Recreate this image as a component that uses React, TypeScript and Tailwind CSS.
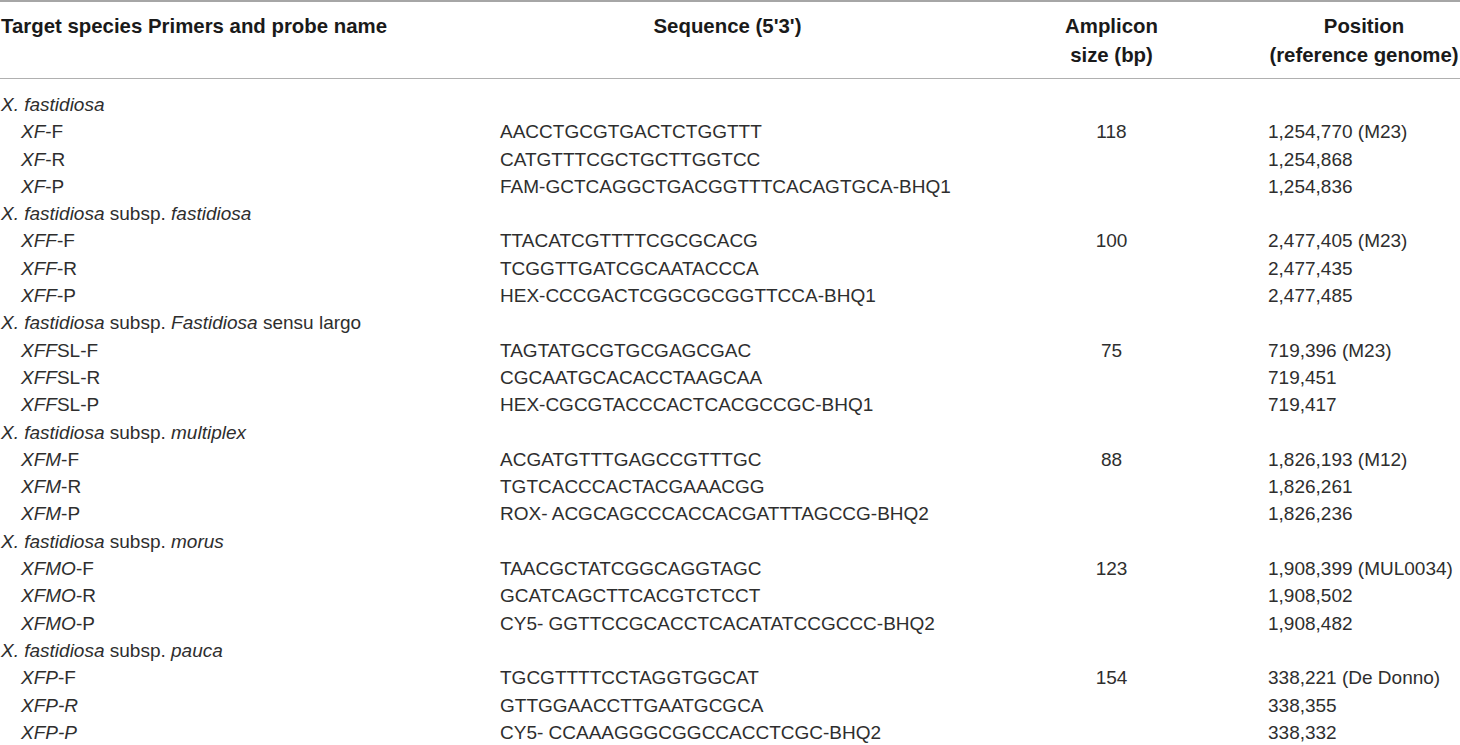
import { ReactNode } from "react";

type Primer = {
  name: ReactNode;
  seq: string;
  size?: string;
  pos: string;
};

type Group = {
  label: ReactNode;
  primers: Primer[];
};

const groups: Group[] = [
  {
    label: <i>X. fastidiosa</i>,
    primers: [
      { name: <><i>XF</i>-F</>, seq: "AACCTGCGTGACTCTGGTTT", size: "118", pos: "1,254,770 (M23)" },
      { name: <><i>XF</i>-R</>, seq: "CATGTTTCGCTGCTTGGTCC", pos: "1,254,868" },
      { name: <><i>XF</i>-P</>, seq: "FAM-GCTCAGGCTGACGGTTTCACAGTGCA-BHQ1", pos: "1,254,836" },
    ],
  },
  {
    label: <><i>X. fastidiosa</i> subsp. <i>fastidiosa</i></>,
    primers: [
      { name: <><i>XFF</i>-F</>, seq: "TTACATCGTTTTCGCGCACG", size: "100", pos: "2,477,405 (M23)" },
      { name: <><i>XFF</i>-R</>, seq: "TCGGTTGATCGCAATACCCA", pos: "2,477,435" },
      { name: <><i>XFF</i>-P</>, seq: "HEX-CCCGACTCGGCGCGGTTCCA-BHQ1", pos: "2,477,485" },
    ],
  },
  {
    label: <><i>X. fastidiosa</i> subsp. <i>Fastidiosa</i> sensu largo</>,
    primers: [
      { name: <><i>XFF</i>SL-F</>, seq: "TAGTATGCGTGCGAGCGAC", size: "75", pos: "719,396 (M23)" },
      { name: <><i>XFF</i>SL-R</>, seq: "CGCAATGCACACCTAAGCAA", pos: "719,451" },
      { name: <><i>XFF</i>SL-P</>, seq: "HEX-CGCGTACCCACTCACGCCGC-BHQ1", pos: "719,417" },
    ],
  },
  {
    label: <><i>X. fastidiosa</i> subsp. <i>multiplex</i></>,
    primers: [
      { name: <><i>XFM</i>-F</>, seq: "ACGATGTTTGAGCCGTTTGC", size: "88", pos: "1,826,193 (M12)" },
      { name: <><i>XFM</i>-R</>, seq: "TGTCACCCACTACGAAACGG", pos: "1,826,261" },
      { name: <><i>XFM</i>-P</>, seq: "ROX- ACGCAGCCCACCACGATTTAGCCG-BHQ2", pos: "1,826,236" },
    ],
  },
  {
    label: <><i>X. fastidiosa</i> subsp. <i>morus</i></>,
    primers: [
      { name: <><i>XFMO</i>-F</>, seq: "TAACGCTATCGGCAGGTAGC", size: "123", pos: "1,908,399 (MUL0034)" },
      { name: <><i>XFMO</i>-R</>, seq: "GCATCAGCTTCACGTCTCCT", pos: "1,908,502" },
      { name: <><i>XFMO</i>-P</>, seq: "CY5- GGTTCCGCACCTCACATATCCGCCC-BHQ2", pos: "1,908,482" },
    ],
  },
  {
    label: <><i>X. fastidiosa</i> subsp. <i>pauca</i></>,
    primers: [
      { name: <><i>XFP</i>-F</>, seq: "TGCGTTTTCCTAGGTGGCAT", size: "154", pos: "338,221 (De Donno)" },
      { name: <i>XFP-R</i>, seq: "GTTGGAACCTTGAATGCGCA", pos: "338,355" },
      { name: <i>XFP-P</i>, seq: "CY5- CCAAAGGGCGGCCACCTCGC-BHQ2", pos: "338,332" },
    ],
  },
];

const cols = "grid grid-cols-[500px_455px_313px_192px]";

export default function App() {
  return (
    <main
      className="h-[745px] w-[1460px] overflow-hidden bg-white text-[19px] text-[#2e2e2e]"
      style={{ fontFamily: '"Liberation Sans", Arial, sans-serif' }}
    >
      <div className={`${cols} border-t-2 border-b border-t-[#a6a6a6] border-b-[#b0b0b0] pt-[10px] pb-[8px] text-[20.4px] font-bold leading-[29px] text-[#1a1a1a]`}>
        <div className="whitespace-nowrap pl-px">Target species Primers and probe name</div>
        <div className="text-center">Sequence (5'3')</div>
        <div className="text-center">
          Amplicon
          <br />
          size (bp)
        </div>
        <div className="whitespace-nowrap text-center">
          Position
          <br />
          (reference genome)
        </div>
      </div>

      <div className="pt-[12px]">
        {groups.map((group, gi) => (
          <div key={gi}>
            <div className={`${cols} h-[27.3px] items-center`}>
              <div className="whitespace-nowrap pl-px">{group.label}</div>
            </div>
            {group.primers.map((p, pi) => (
              <div key={pi} className={`${cols} h-[27.3px] items-center whitespace-nowrap`}>
                <div className="pl-[21px]">{p.name}</div>
                <div>{p.seq}</div>
                <div className="text-center">{p.size}</div>
                <div>{p.pos}</div>
              </div>
            ))}
          </div>
        ))}
      </div>
    </main>
  );
}
